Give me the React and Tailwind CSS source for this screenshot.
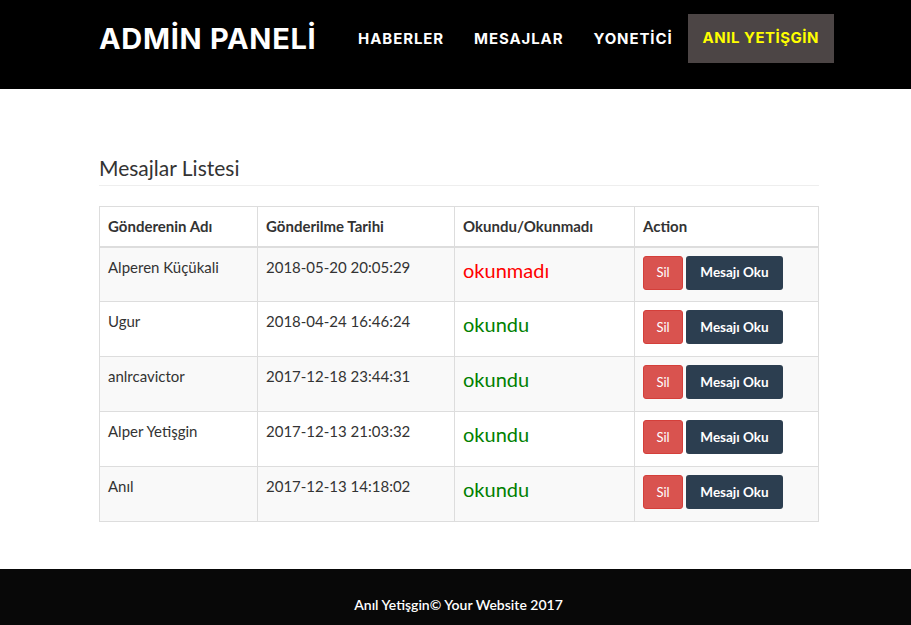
import React from "react";

const rows = [
  { name: "Alperen Küçükali", date: "2018-05-20 20:05:29", read: false },
  { name: "Ugur", date: "2018-04-24 16:46:24", read: true },
  { name: "anlrcavictor", date: "2017-12-18 23:44:31", read: true },
  { name: "Alper Yetişgin", date: "2017-12-13 21:03:32", read: true },
  { name: "Anıl", date: "2017-12-13 14:18:02", read: true },
];

export default function App() {
  return (
    <div className="min-h-[625px] bg-white flex flex-col" style={{ fontFamily: "Lato, 'Noto Sans', sans-serif" }}>
      <header className="bg-black h-[89px]">
        <div className="ml-[99px] w-[735px] flex items-center h-[77px]">
          <div
            className="text-white text-[29px] font-bold tracking-[0.7px] leading-none"
            style={{ fontFamily: "Inter, 'DejaVu Sans', sans-serif" }}
          >
            ADMİN PANELİ
          </div>
          <nav
            className="ml-auto flex items-center text-[15px] font-bold uppercase tracking-[0.9px] pt-[1px]"
            style={{ fontFamily: "Inter, 'DejaVu Sans', sans-serif" }}
          >
            <a className="text-white px-[15px] py-[16px]">HABERLER</a>
            <a className="text-white px-[15px] py-[16px]">MESAJLAR</a>
            <a className="text-white px-[15px] py-[16px]">YONETİCİ</a>
            <a className="text-[#ffff00] bg-[#4c4545] h-[49px] flex items-center px-[15px] mb-[1px] tracking-[0.5px]">ANIL YETİŞGİN</a>
          </nav>
        </div>
      </header>

      <main className="ml-[99px] w-[720px] pt-[66px] pb-[47px]">
        <h2 className="text-[#333] text-[21px] leading-[26px] pb-[4px] border-b border-[#eee] mb-[20px]">
          Mesajlar Listesi
        </h2>
        <table className="w-[720px] border-collapse text-[15px] text-[#333] leading-[21px]">
          <thead>
            <tr className="h-[40px]">
              <th className="w-[158px] text-left font-bold px-[8px] border border-[#ddd] border-b-2">Gönderenin Adı</th>
              <th className="w-[197px] text-left font-bold px-[8px] border border-[#ddd] border-b-2">Gönderilme Tarihi</th>
              <th className="w-[180px] text-left font-bold px-[8px] border border-[#ddd] border-b-2">Okundu/Okunmadı</th>
              <th className="text-left font-bold px-[8px] border border-[#ddd] border-b-2">Action</th>
            </tr>
          </thead>
          <tbody>
            {rows.map((r, i) => (
              <tr key={i} className={i % 2 === 0 ? "bg-[#f9f9f9] h-[55px]" : "bg-white h-[55px]"}>
                <td className="align-top px-[8px] pt-[9px] border border-[#ddd]">{r.name}</td>
                <td className="align-top px-[8px] pt-[9px] border border-[#ddd]">{r.date}</td>
                <td className="align-top px-[8px] pt-[10px] border border-[#ddd]">
                  <span className={r.read ? "text-[20px] leading-[24px] text-[#008000]" : "text-[20px] leading-[24px] text-[#ff0000]"}>
                    {r.read ? "okundu" : "okunmadı"}
                  </span>
                </td>
                <td className="align-top px-[8px] pt-[8px] border border-[#ddd]">
                  <div className="flex gap-[3px]">
                    <button className="h-[34px] w-[40px] rounded-[3px] bg-[#d9534f] border border-[#d43f3a] text-white text-[13px]">
                      Sil
                    </button>
                    <button className="h-[34px] w-[97px] rounded-[3px] bg-[#2c3e50] text-white text-[13.5px] font-bold">
                      Mesajı Oku
                    </button>
                  </div>
                </td>
              </tr>
            ))}
          </tbody>
        </table>
      </main>

      <footer className="bg-[#080808] h-[56px] flex items-center justify-center pt-[14px] pl-[6px] mt-auto">
        <p className="text-white text-[14px] font-semibold">Anıl Yetişgin© Your Website 2017</p>
      </footer>
    </div>
  );
}
